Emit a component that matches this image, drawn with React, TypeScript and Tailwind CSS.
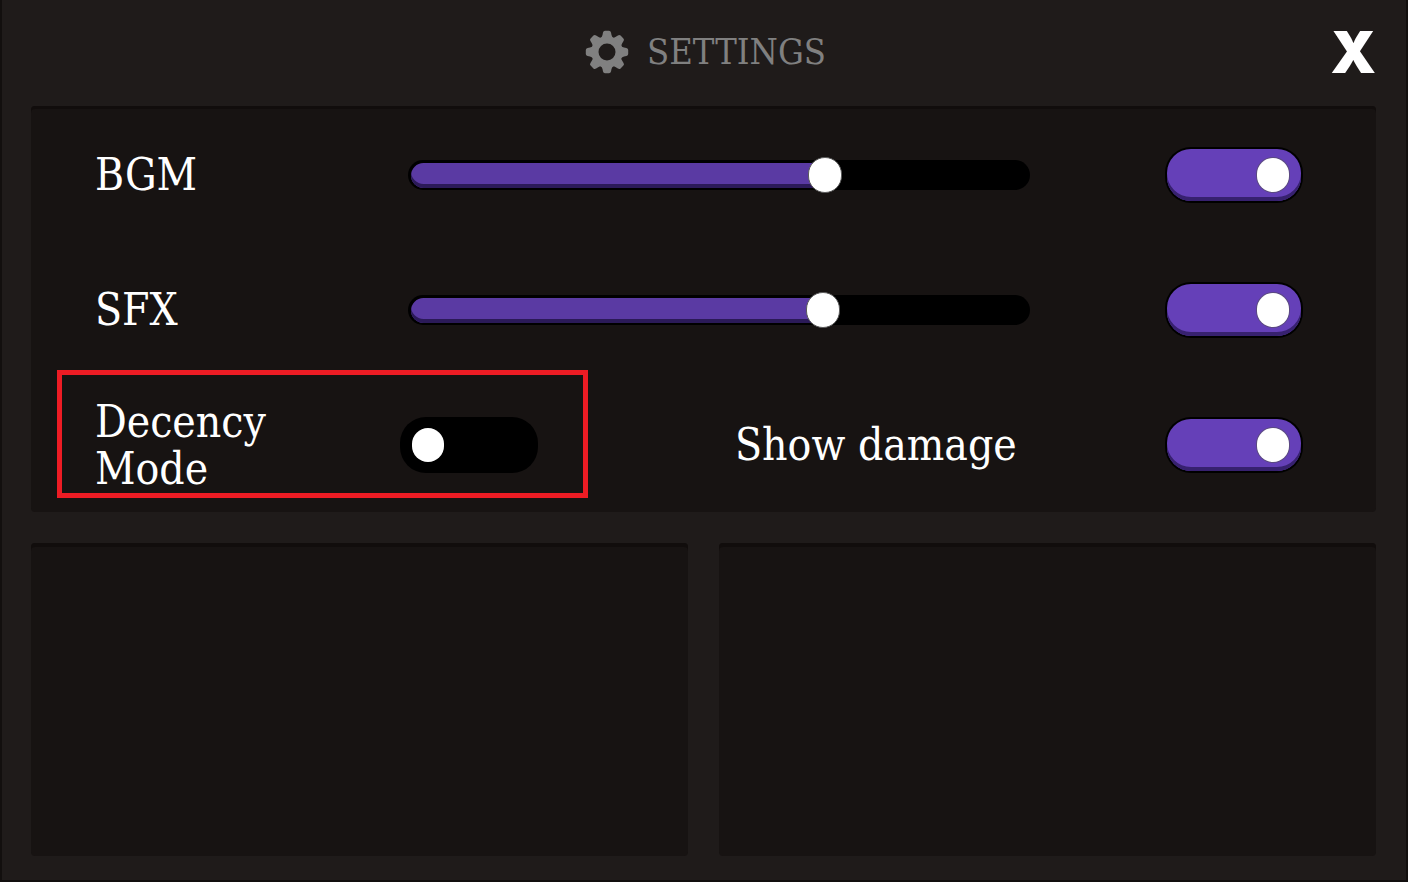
import React, { useState } from "react";

interface ToggleProps {
  id: string;
  label: string;
  checked: boolean;
  onChange: (checked: boolean) => void;
}

const Toggle: React.FC<ToggleProps> = ({ id, label, checked, onChange }) => {
  return (
    <span className="relative block h-14 w-[138px] shrink-0 rounded-[26px] bg-black p-0.5">
      <span
        className={`flex h-full items-center rounded-3xl ${
          checked
            ? "justify-end bg-[#6540b8] px-3 shadow-[inset_0_-4px_0_#37216f]"
            : "justify-start bg-black px-2.5"
        }`}
      >
        <span
          className={`h-[34px] w-8 rounded-full bg-white ${
            checked ? "shadow-[0_0_0_1px_#5b4a80]" : ""
          }`}
        />
      </span>
      <input
        id={id}
        type="checkbox"
        aria-label={label}
        checked={checked}
        onChange={(e) => onChange(e.target.checked)}
        className="absolute inset-0 h-full w-full cursor-pointer opacity-0"
      />
    </span>
  );
};

interface VolumeSliderProps {
  id: string;
  value: number;
  onChange: (value: number) => void;
}

const VolumeSlider: React.FC<VolumeSliderProps> = ({ id, value, onChange }) => {
  return (
    <div className="relative h-[30px] flex-1 rounded-full bg-black px-[3px] pt-[3px] pb-0.5">
      <div
        className="h-full rounded-l-full bg-[#5a3aa3] shadow-[inset_0_-4px_0_#2b1a58]"
        style={{ width: `${value}%` }}
      />
      <input
        id={id}
        type="range"
        min={0}
        max={100}
        step={0.1}
        value={value}
        onChange={(e) => onChange(Number(e.target.value))}
        className="absolute inset-0 h-full w-full cursor-pointer appearance-none bg-transparent [&::-webkit-slider-thumb]:h-9 [&::-webkit-slider-thumb]:w-[34px] [&::-webkit-slider-thumb]:appearance-none [&::-webkit-slider-thumb]:rounded-full [&::-webkit-slider-thumb]:border [&::-webkit-slider-thumb]:border-[#5b5b5b] [&::-webkit-slider-thumb]:bg-white"
      />
    </div>
  );
};

const GearIcon = ({ className }: { className?: string }) => (
  <svg viewBox="-22 -22 44 44" fill="currentColor" className={className}>
    <circle r="12" fill="none" stroke="currentColor" strokeWidth="7" />
    {[0, 45, 90, 135, 180, 225, 270, 315].map((angle) => (
      <path
        key={angle}
        transform={`rotate(${angle})`}
        d="M-7 -13.5Q-5 -14.5 -4.5 -17L-4 -19.4Q-3.6 -21.2 -2 -21.2H2Q3.6 -21.2 4 -19.4L4.5 -17Q5 -14.5 7 -13.5L4 -10H-4Z"
      />
    ))}
  </svg>
);

export default function App() {
  const [bgm, setBgm] = useState(68);
  const [sfx, setSfx] = useState(67.7);
  const [bgmOn, setBgmOn] = useState(true);
  const [sfxOn, setSfxOn] = useState(true);
  const [decency, setDecency] = useState(false);
  const [showDamage, setShowDamage] = useState(true);

  return (
    <div className="flex min-h-screen flex-col border-x-2 border-b-2 border-[#120f0e] bg-[#1f1b1a] pr-[30px] pb-6 pl-[29px] font-['DejaVu_Serif_Condensed','DejaVu_Serif',serif] text-white">
      <header className="grid h-[106px] grid-cols-[1fr_auto_1fr] items-center pb-0.5">
        <h1 className="col-start-2 flex items-center gap-[18px] pl-1 text-4xl text-[#808080]">
          <GearIcon className="size-11" />
          SETTINGS
        </h1>
        <button
          aria-label="Close"
          className="cursor-pointer justify-self-end font-['Inter','DejaVu_Sans',sans-serif] text-[58px] leading-none font-black"
        >
          X
        </button>
      </header>

      <section className="rounded-sm bg-[#171312] pt-px pr-[73px] pl-16 text-[44px] leading-[47px] shadow-[inset_0_3px_0_#110d0c]">
        <div className="flex h-[135px] items-center">
          <label htmlFor="bgm" className="w-[313px]">
            BGM
          </label>
          <VolumeSlider id="bgm" value={bgm} onChange={setBgm} />
          <div className="ml-[135px]">
            <Toggle id="bgm-on" label="BGM on" checked={bgmOn} onChange={setBgmOn} />
          </div>
        </div>

        <div className="flex h-[135px] items-center">
          <label htmlFor="sfx" className="w-[313px]">
            SFX
          </label>
          <VolumeSlider id="sfx" value={sfx} onChange={setSfx} />
          <div className="ml-[135px]">
            <Toggle id="sfx-on" label="SFX on" checked={sfxOn} onChange={setSfxOn} />
          </div>
        </div>

        <div className="flex h-[135px] items-center justify-between">
          <div className="relative flex items-center">
            <label htmlFor="decency" className="w-[305px]">
              Decency
              <br />
              Mode
            </label>
            <Toggle id="decency" label="Decency Mode" checked={decency} onChange={setDecency} />
            <div className="pointer-events-none absolute -top-7 -right-[50px] -bottom-1.5 -left-[38px] border-5 border-[#ed1c24]" />
          </div>
          <div className="flex w-[568px] items-center justify-between">
            <label htmlFor="damage">Show damage</label>
            <Toggle id="damage" label="Show damage" checked={showDamage} onChange={setShowDamage} />
          </div>
        </div>
      </section>

      <div className="mt-[31px] grid flex-1 grid-cols-2 gap-[31px]">
        <section className="rounded-sm bg-[#171312] shadow-[inset_0_4px_0_#110d0c]" />
        <section className="rounded-sm bg-[#171312] shadow-[inset_0_4px_0_#110d0c]" />
      </div>
    </div>
  );
}
